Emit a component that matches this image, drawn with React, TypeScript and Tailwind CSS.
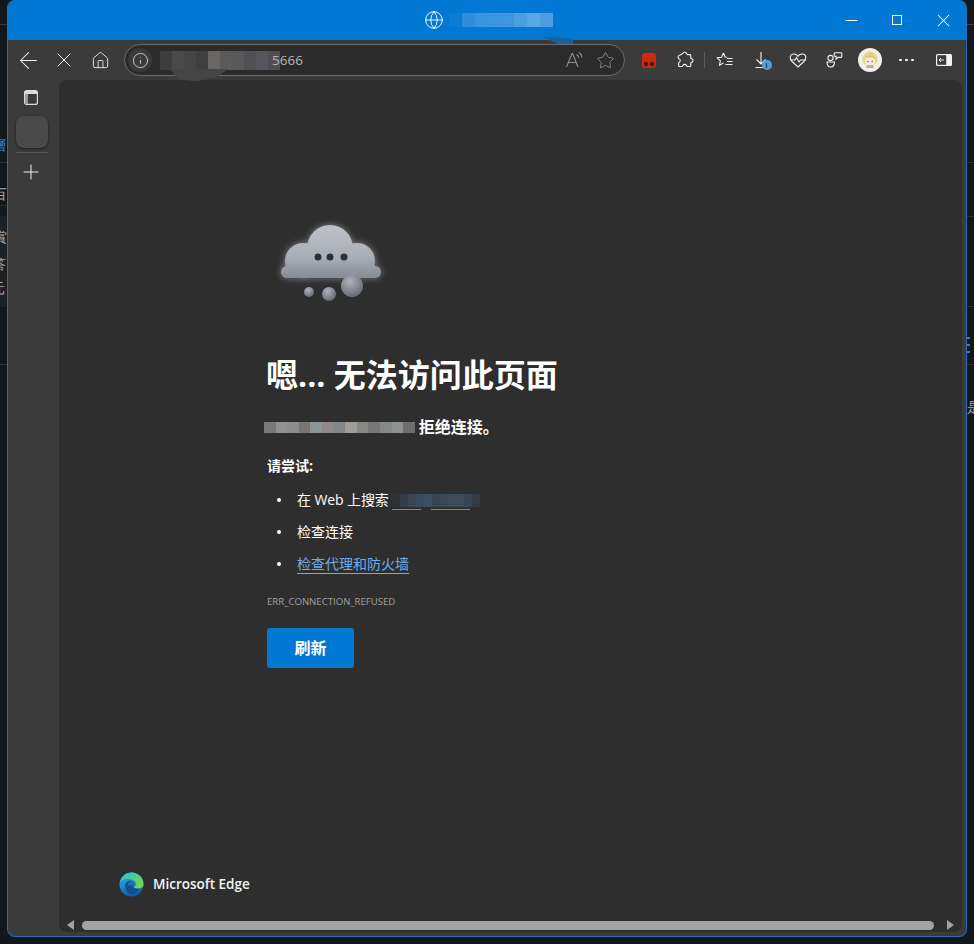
import { ArrowLeft, Globe, Home, Info, Minus, Plus, Star, X } from 'lucide-react';

const cjk = "font-['Open_Sans','Noto_Sans_CJK_SC',sans-serif]";

function Mosaic({ cells, size, className = '' }: { cells: string[]; size: string; className?: string }) {
    return (
        <span className={`inline-flex align-middle ${className}`}>
            {cells.map((c, i) => (
                <span key={i} className={`${size} ${c}`} />
            ))}
        </span>
    );
}

function ToolBtn({ children, className = 'w-9' }: { children: React.ReactNode; className?: string }) {
    return <div className={`flex h-9 items-center justify-center text-[#f2f2f2] ${className}`}>{children}</div>;
}

function LeftStrip() {
    return (
        <div className="relative w-[7px] shrink-0 overflow-hidden bg-[#12171c] text-[14px] leading-none text-[#a9a9a9]">
            <div className="absolute left-0 top-[24px] h-px w-full bg-[#3c3c3c]" />
            <div className="absolute left-0 top-[162px] h-px w-full bg-[#2c3034]" />
            <div className="absolute left-0 top-[205px] h-px w-full bg-[#2c3034]" />
            <div className="absolute left-0 top-[216px] h-[91px] w-full bg-[#1c2126]" />
            <div className="absolute left-0 top-[364px] h-px w-full bg-[#2c3034]" />
            <span className="absolute left-[-8px] top-[138px] text-[#2f8fe0]">層</span>
            <span className="absolute left-[-7px] top-[187px]">百</span>
            <span className="absolute left-[-7px] top-[230px]">賞</span>
            <span className="absolute left-[-8px] top-[257px]">答</span>
            <span className="absolute left-[-9px] top-[281px]">元</span>
        </div>
    );
}

function RightStrip() {
    return (
        <div className="relative w-[7px] shrink-0 overflow-hidden bg-[#12171c] text-[14px] leading-none text-[#a9a9a9]">
            <div className="absolute left-0 top-[24px] h-px w-full bg-[#3c3c3c]" />
            <div className="absolute left-0 top-[162px] h-px w-full bg-[#2c3034]" />
            <div className="absolute left-0 top-[216px] h-px w-full bg-[#2c3034]" />
            <div className="absolute left-0 top-[306px] h-px w-full bg-[#2c3034]" />
            <div className="absolute left-0 top-[364px] h-px w-full bg-[#2c3034]" />
            <div className="absolute left-0 top-[337px] h-0.5 w-[3px] bg-[#2f7fc9]" />
            <div className="absolute left-0 top-[344px] h-0.5 w-[3px] bg-[#2f7fc9]" />
            <div className="absolute left-0 top-[351px] h-0.5 w-[3px] bg-[#2f7fc9]" />
            <span className="absolute left-0 top-[400px]">是</span>
        </div>
    );
}

function TitleBar() {
    return (
        <div className="relative flex h-10 shrink-0 items-center bg-[#0078d4] text-white">
            <div className="flex flex-1 items-center justify-center pl-[141px]">
                <Globe size={20} strokeWidth={1.1} />
                <Mosaic
                    className="ml-[5px]"
                    size="h-[14px] w-[13px]"
                    cells={['bg-[#0a7cd6]', 'bg-[#2e8cdc]', 'bg-[#3a93de]', 'bg-[#3d95df]', 'bg-[#3f96df]', 'bg-[#4c9de2]', 'bg-[#5aa5e5]', 'bg-[#4c9de2]']}
                />
            </div>
            <div className="absolute left-[533px] top-[36px] h-[9px] w-[32px] bg-[#1f5e96] [clip-path:polygon(0_0,100%_40%,100%_100%,60%_100%)]" />
            <div className="flex">
                <div className="flex h-10 w-[46px] items-center justify-center">
                    <Minus size={19} strokeWidth={1.3} />
                </div>
                <div className="flex h-10 w-[46px] items-center justify-center">
                    <div className="h-[10px] w-[10px] border border-white" />
                </div>
                <div className="flex h-10 w-[46px] items-center justify-center">
                    <X size={21} strokeWidth={1.2} />
                </div>
            </div>
        </div>
    );
}

function AddressBar() {
    return (
        <div className="relative ml-[6px] flex h-[32px] w-[501px] items-center rounded-full border border-[#6b6b6b] bg-[#2b2b2b] pl-[3px] pr-[9px]">
            <div className="flex h-[24px] w-[24px] items-center justify-center rounded-full bg-[#3a3a3a] text-[#e0e0e0]">
                <Info size={17} strokeWidth={1.2} />
            </div>
            <Mosaic
                className="ml-[8px]"
                size="h-[19px] w-[12px]"
                cells={['bg-[#3d3d3f]', 'bg-[#4a4a4b]', 'bg-[#454545]', 'bg-[#3f3f3f]', 'bg-[#6a6663]', 'bg-[#5c5a58]', 'bg-[#585858]', 'bg-[#505055]', 'bg-[#55565b]', 'bg-[#4f4f53]']}
            />
            <span className={`ml-[-8px] text-[13.500px] text-[#b8b8b8] ${cjk}`}>5666</span>
            <div className="flex-1" />
            <svg width="20" height="20" viewBox="0 0 20 20" fill="none" stroke="#8f8f8f" strokeWidth="1.1" className="mr-[12px]">
                <path d="M2.5 17 8 3.5h.6L14 17M4.4 12.5h7.8" />
                <path d="M12.5 4.5c1.4.7 2.2 1.9 2.3 3.4M14.7 2.5c2 1 3.2 3 3.2 5.3" />
            </svg>
            <Star size={19} strokeWidth={1} className="text-[#9a9a9a]" />
            <div className="absolute left-[45px] top-[24px] h-[12px] w-[58px] bg-[#454545] [clip-path:polygon(0_0,100%_0,80%_70%,45%_100%,15%_90%)]" />
        </div>
    );
}

function ToolBar() {
    return (
        <div className="flex h-10 shrink-0 items-center bg-[#3b3b3b] pl-[2px]">
            <ToolBtn>
                <ArrowLeft size={27} strokeWidth={0.9} />
            </ToolBtn>
            <ToolBtn>
                <X size={24} strokeWidth={1} />
            </ToolBtn>
            <ToolBtn>
                <Home size={19} strokeWidth={1.1} />
            </ToolBtn>
            <AddressBar />
            <ToolBtn className="ml-[6px] w-9">
                <svg width="14" height="15" viewBox="0 0 14 15">
                    <rect width="14" height="15" rx="3" fill="#cc2b0c" />
                    <circle cx="4" cy="11" r="2.2" fill="#3f1a12" />
                    <circle cx="10" cy="11" r="2.2" fill="#3f1a12" />
                </svg>
            </ToolBtn>
            <ToolBtn>
                <svg width="18" height="18" viewBox="0 0 18 18" fill="none" stroke="#f2f2f2" strokeWidth="1.1">
                    <path d="M7 2.2c.8-1.2 3-1.2 3.6.2.3.8 0 1.2 1 1.2h2.2c.6 0 1 .4 1 1v2.2c0 .8.6 1 1.2 1 1.2.3 1.3 2.9 0 3.3-.6.2-1.2.2-1.2 1v2.4c0 .6-.4 1-1 1h-2.4c-.8 0-.8-.8-1-1.2-.6-1.2-2.8-1.2-3.4 0-.2.4-.2 1.2-1 1.2H3.6c-.6 0-1-.4-1-1v-2.4c0-.8.7-.9 1-1.2 1-.9.8-2.7-.6-3.2C2.3 7.5 1.6 6 2.4 5c.6-.8 1.6-.9 2.3-1.2C6 3.4 6.3 3.1 7 2.2Z" />
                </svg>
            </ToolBtn>
            <div className="ml-[1px] h-[16px] w-px bg-[#5a5a5a]" />
            <ToolBtn className="ml-[2px] w-9">
                <svg width="18" height="18" viewBox="0 0 18 18" fill="none" stroke="#f2f2f2" strokeWidth="1.1">
                    <path d="M7.4 2 9.2 6h-.1l2 .2M7.4 2 5.6 6.2 1.2 6.8l3.2 3-1 4.6 4-2.4" strokeLinejoin="round" />
                    <path d="M11 7.5h5.5M11 10.5h5.5M9.5 13.5h7" />
                </svg>
            </ToolBtn>
            <ToolBtn className="w-[37px]">
                <div className="relative h-[18px] w-[18px]">
                    <svg width="18" height="18" viewBox="0 0 18 18" fill="none" stroke="#f2f2f2" strokeWidth="1.1">
                        <path d="M8 1v12M3.5 8.5 8 13l4.500-4.500M2.500 16.500H10" />
                    </svg>
                    <div className="absolute left-[9px] top-[9px] flex h-[10px] w-[10px] items-center justify-center rounded-full bg-[#4f9fdc] text-[7px] font-bold leading-none text-[#17324a]">
                        i
                    </div>
                </div>
            </ToolBtn>
            <ToolBtn>
                <svg width="18" height="18" viewBox="0 0 18 18" fill="none" stroke="#f2f2f2" strokeWidth="1.1">
                    <path d="M3 10.500C1.800 9.200 1.200 8 1.200 6.500 1.200 4.400 2.900 3 4.800 3 6.400 3 8 3.800 9 5.200 10 3.800 11.600 3 13.200 3c1.900 0 3.600 1.400 3.600 3.500 0 1.500-.6 2.700-1.800 4L9 16l-6-5.500Z" />
                    <path d="M1.500 9H6l1.500-2.500L10 11l1.500-2h5" />
                </svg>
            </ToolBtn>
            <ToolBtn>
                <svg width="18" height="18" viewBox="0 0 18 18" fill="none" stroke="#f2f2f2" strokeWidth="1.1">
                    <circle cx="5.500" cy="7" r="2.600" />
                    <path d="M2 11h7.500c0 3-1.500 5-3.700 5S2 14 2 11Z" />
                    <path d="M10 1.800h6c.5 0 .8.300.8.800v3c0 .5-.3.800-.8.800h-3l-2 1.800V5.400h-1c-.5 0-.8-.3-.8-.8v-2c0-.5.300-.8.800-.8Z" />
                </svg>
            </ToolBtn>
            <ToolBtn>
                <svg width="24" height="24" viewBox="0 0 24 24">
                    <circle cx="12" cy="12" r="12" fill="#f4f1e8" />
                    <path d="M4.500 13C4 7 8 3.500 12 3.500S20 7 19.500 13c-1 2-1.500 3-2.500 3.500l-10 0C6 16 5 15 4.500 13Z" fill="#e8d48c" />
                    <ellipse cx="12" cy="13" rx="5" ry="4.500" fill="#f7ecd6" />
                    <path d="M7 10c2-3 7-3.500 10 0-3-1-7-1-10 0Z" fill="#d9bd6a" />
                    <circle cx="9.800" cy="13.500" r=".7" fill="#6b5a3a" />
                    <circle cx="14.200" cy="13.500" r=".7" fill="#6b5a3a" />
                    <path d="M8 20h8l-1-3H9Z" fill="#b9b29c" />
                </svg>
            </ToolBtn>
            <ToolBtn>
                <div className="flex gap-[3px]">
                    <span className="h-[2px] w-[3px] rounded-full bg-white" />
                    <span className="h-[2px] w-[3px] rounded-full bg-white" />
                    <span className="h-[2px] w-[3px] rounded-full bg-white" />
                </div>
            </ToolBtn>
            <ToolBtn className="ml-[2px] w-9">
                <svg width="16" height="12" viewBox="0 0 16 12">
                    <rect width="16" height="12" rx="1.500" fill="#f2f2f2" />
                    <rect x="1.200" y="1.200" width="9" height="9.600" fill="#3b3b3b" />
                    <path d="M3 6h5M5 4 3 6l2 2" stroke="#f2f2f2" fill="none" />
                </svg>
            </ToolBtn>
        </div>
    );
}

function SideBar() {
    return (
        <div className="flex w-[51px] shrink-0 flex-col items-center bg-[#3b3b3b] pr-[3px] pt-[10px]">
            <svg width="14" height="15" viewBox="0 0 14 15" fill="none" className="mr-[2px]">
                <rect x=".6" y=".6" width="12.800" height="13.800" rx="2" stroke="#dcdcdc" strokeWidth="1.200" />
                <rect x="1" y="1" width="12" height="3" fill="#dcdcdc" />
                <rect x="1" y="4" width="3" height="10" fill="#9a9a9a" />
            </svg>
            <div className="mt-[11px] h-8 w-8 rounded-lg bg-[#4a4a4a] shadow-[0_1px_3px_rgba(0,0,0,0.5)]" />
            <div className="mt-[4px] h-px w-8 bg-[#555555]" />
            <Plus size={24} strokeWidth={1} className="mr-[2px] mt-[7px] text-[#f0f0f0]" />
        </div>
    );
}

function CloudShape({ fill }: { fill: string }) {
    return (
        <g fill={fill}>
            <circle cx="33" cy="47" r="18" />
            <circle cx="60" cy="34" r="23" />
            <circle cx="87" cy="47" r="18" />
            <rect x="11" y="52" width="100" height="12" rx="6" />
            <rect x="30" y="40" width="60" height="16" />
        </g>
    );
}

function Cloud() {
    return (
        <svg width="120" height="90" viewBox="0 0 120 90" className="block overflow-visible">
            <defs>
                <linearGradient id="cloudFill" gradientUnits="userSpaceOnUse" x1="0" y1="11" x2="0" y2="64">
                    <stop offset="0" stopColor="#bfc2c8" />
                    <stop offset="0.6" stopColor="#a9aeb7" />
                    <stop offset="1" stopColor="#868b95" />
                </linearGradient>
                <radialGradient id="ball" cx="0.4" cy="0.3" r="0.8">
                    <stop offset="0" stopColor="#aeb2ba" />
                    <stop offset="1" stopColor="#5e626b" />
                </radialGradient>
                <filter id="glow" x="-20%" y="-20%" width="140%" height="140%">
                    <feGaussianBlur stdDeviation="3.500" />
                </filter>
            </defs>
            <g opacity="0.5" filter="url(#glow)">
                <CloudShape fill="#d6d8dc" />
            </g>
            <CloudShape fill="url(#cloudFill)" />
            <path d="M15 64.500h92" stroke="#4b4f57" strokeWidth="1.200" opacity="0.800" />
            <circle cx="48" cy="43" r="3.500" fill="#2f3034" />
            <circle cx="60" cy="43" r="3.500" fill="#2f3034" />
            <circle cx="74" cy="43" r="3.500" fill="#2f3034" />
            <circle cx="39" cy="78" r="5" fill="url(#ball)" />
            <circle cx="59" cy="80" r="7" fill="url(#ball)" />
            <circle cx="82" cy="72" r="11" fill="url(#ball)" />
        </svg>
    );
}

function EdgeLogo() {
    return (
        <svg width="25" height="25" viewBox="0 0 25 25">
            <defs>
                <linearGradient id="edgeA" x1="0.2" y1="0" x2="0.5" y2="1">
                    <stop offset="0" stopColor="#2cb5e8" />
                    <stop offset="0.6" stopColor="#1780cf" />
                    <stop offset="1" stopColor="#0c59a4" />
                </linearGradient>
                <linearGradient id="edgeB" x1="0.2" y1="0" x2="1" y2="0.7">
                    <stop offset="0" stopColor="#2ec4d6" />
                    <stop offset="1" stopColor="#74d84a" />
                </linearGradient>
            </defs>
            <circle cx="12.500" cy="12.500" r="12" fill="url(#edgeA)" />
            <path d="M1 10C3 3.500 8 .5 12.500.5 19 .5 24.500 5.500 24.500 12c0 3-2.500 4.500-5 4.500-2 0-4-.5-4.500-1.500 2.200-1 2.500-3.500 1-5.500C13 6 5 5.500 1 10Z" fill="url(#edgeB)" />
            <path d="M6 14c0-3.500 3.500-6 6.500-5 2 .6 3 2 3 3.500 0 1-1 2-1.500 2.500 1 1.500 4 2 6.500 1.500-1.500 3.500-5 6-8.500 5.500-3.500-.5-6-4-5.500-8Z" fill="#0f4f8f" />
            <path d="M12.500 9c2 0 3.500 1.500 3.500 3.500 0 1-.6 1.800-1.500 2.300-1.800-1-4-1.500-6-1 .2-2.500 1.800-4.800 4-4.800Z" fill="#2a6ea8" />
        </svg>
    );
}

function ErrorPage() {
    return (
        <div className={`flex flex-1 flex-col overflow-hidden rounded-lg bg-[#2e2e2e] ${cjk}`}>
            <div className="flex flex-1 flex-col pl-[208px] pt-[134px] text-white">
                <div className="ml-[3px]">
                    <Cloud />
                </div>
                <h1 className="ml-[-1px] mt-[49px] text-[32px] font-bold leading-[44px]">嗯... 无法访问此页面</h1>
                <p className="mt-[18px] flex h-[24px] items-center text-[16px] font-bold">
                    <Mosaic
                        className="ml-[-3px] mr-[4px]"
                        size="h-[11px] w-[11.600px]"
                        cells={['bg-[#77797b]', 'bg-[#909192]', 'bg-[#8d8d8d]', 'bg-[#7a7673]', 'bg-[#8d9497]', 'bg-[#8f8a89]', 'bg-[#828687]', 'bg-[#a09d98]', 'bg-[#868886]', 'bg-[#7a7673]', 'bg-[#84888a]', 'bg-[#8f9090]', 'bg-[#6d6d6d]']}
                    />
                    拒绝连接。
                </p>
                <p className="mt-[17px] h-[20px] text-[14px] font-bold leading-[20px]">请尝试:</p>
                <ul className="mt-[14px] flex flex-col gap-[12px] text-[14px] leading-[20px]">
                    <li className="flex h-[20px] items-center">
                        <span className="ml-[10px] mr-[16px] h-[4px] w-[4px] rounded-full bg-white" />
                        <span className="tracking-[-0.1px]">在 Web 上搜索</span>
                        <span className="relative ml-[3px] inline-flex h-[20px] w-[78px] items-center">
                            <Mosaic
                                className="shrink-0"
                                size="h-[13px] w-[8px]"
                                cells={['bg-[#2e3237]', 'bg-[#333c47]', 'bg-[#3a4654]', 'bg-[#394a5c]', 'bg-[#3d4f60]', 'bg-[#384553]', 'bg-[#3a4755]', 'bg-[#3d4a58]', 'bg-[#3c4a5a]', 'bg-[#374554]', 'bg-[#333b44]']}
                            />
                            <span className="absolute bottom-0 left-0 h-px w-[29px] bg-[#4f93d2]" />
                            <span className="absolute bottom-0 left-[39px] h-px w-[39px] bg-[#4f93d2]" />
                        </span>
                    </li>
                    <li className="flex h-[20px] items-center">
                        <span className="ml-[10px] mr-[16px] h-[4px] w-[4px] rounded-full bg-white" />
                        检查连接
                    </li>
                    <li className="flex h-[20px] items-center">
                        <span className="ml-[10px] mr-[16px] h-[4px] w-[4px] rounded-full bg-white" />
                        <a className="border-b border-[#6aaef0] leading-[19px] text-[#6aaef0]">检查代理和防火墙</a>
                    </li>
                </ul>
                <p className="mt-[21px] text-[9.600px] leading-[14px] text-[#a0a0a0]">ERR_CONNECTION_REFUSED</p>
                <button className="mt-[19px] h-10 w-[87px] rounded-[3px] bg-[#0078d4] text-[16px] font-bold text-white">刷新</button>
                <div className="mb-[23px] ml-[-148px] mt-auto flex items-center gap-[9px]">
                    <EdgeLogo />
                    <span className="text-[13.500px] font-semibold text-[#f4f4f4]">Microsoft Edge</span>
                </div>
            </div>
            <div className="mb-[2px] flex h-[10px] shrink-0 items-center px-[8px]">
                <div className="h-0 w-0 border-y-[5px] border-r-[7px] border-y-transparent border-r-[#a3a3a3]" />
                <div className="ml-[8px] h-[9px] flex-1 rounded-full bg-[#a3a3a3]" />
                <div className="ml-[13px] h-0 w-0 border-y-[5px] border-l-[7px] border-y-transparent border-l-[#a3a3a3]" />
            </div>
        </div>
    );
}

export default function App() {
    return (
        <div className="flex h-[944px] w-[974px] overflow-hidden bg-[#12171c]">
            <LeftStrip />
            <div className="relative flex h-[937px] w-[960px] shrink-0 flex-col overflow-hidden rounded-lg border-x border-b border-[#2b6cb0] bg-[#3b3b3b]">
                <TitleBar />
                <ToolBar />
                <div className="flex flex-1 pb-[4px] pr-[4px]">
                    <SideBar />
                    <ErrorPage />
                </div>
            </div>
            <RightStrip />
        </div>
    );
}
